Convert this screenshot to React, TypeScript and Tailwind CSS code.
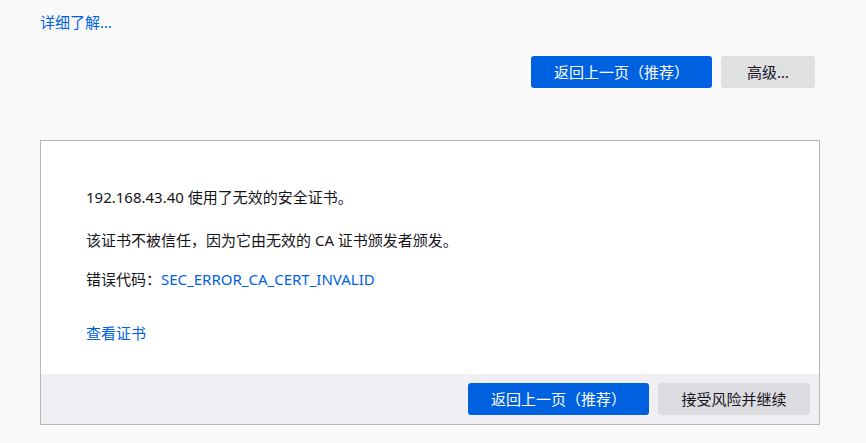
import React from "react";

const font = "font-['Noto_Sans','Noto_Sans_CJK_SC',sans-serif]";

const PrimaryButton = ({ children, className = "" }: { children: React.ReactNode; className?: string }) => (
  <button className={`h-[32px] rounded-[3px] bg-[#0061e0] text-white text-[15px] ${className}`}>{children}</button>
);

const SecondaryButton = ({ children, className = "" }: { children: React.ReactNode; className?: string }) => (
  <button className={`h-[32px] rounded-[3px] text-[#15141a] text-[15px] ${className}`}>{children}</button>
);

const App = () => {
  return (
    <div className={`min-h-screen w-full bg-[#f9f9fa] text-[#15141a] ${font} pl-[40px] pt-[12px] pb-[19px]`}>
      {/* learn more */}
      <a href="#" className="block w-fit text-[15px] leading-[20px] text-[#0061e0]">
        详细了解…
      </a>

      {/* top actions */}
      <div className="w-[775px] flex justify-end gap-[9px] mt-[24px]">
        <PrimaryButton className="w-[181px]">返回上一页（推荐）</PrimaryButton>
        <SecondaryButton className="w-[94px] bg-[#e0e0e2]">高级…</SecondaryButton>
      </div>

      {/* advanced panel */}
      <div className="w-[780px] mt-[52px] border border-[#b6b6b6] bg-white">
        <div className="pl-[45px] pt-[46px] pb-[31px] text-[15px] leading-[20px]">
          <p>192.168.43.40 使用了无效的安全证书。</p>
          <p className="mt-[23px]">该证书不被信任，因为它由无效的 CA 证书颁发者颁发。</p>
          <p className="mt-[19px]">
            错误代码：<a href="#" className="text-[#0061e0]">SEC_ERROR_CA_CERT_INVALID</a>
          </p>
          <a href="#" className="block w-fit mt-[34px] text-[#0061e0]">
            查看证书
          </a>
        </div>
        <div className="h-[50px] bg-[#f0f0f4] flex items-center justify-end gap-[9px] pr-[9px]">
          <PrimaryButton className="w-[181px]">返回上一页（推荐）</PrimaryButton>
          <SecondaryButton className="w-[152px] bg-[#dcdce0]">接受风险并继续</SecondaryButton>
        </div>
      </div>
    </div>
  );
};

export default App;
